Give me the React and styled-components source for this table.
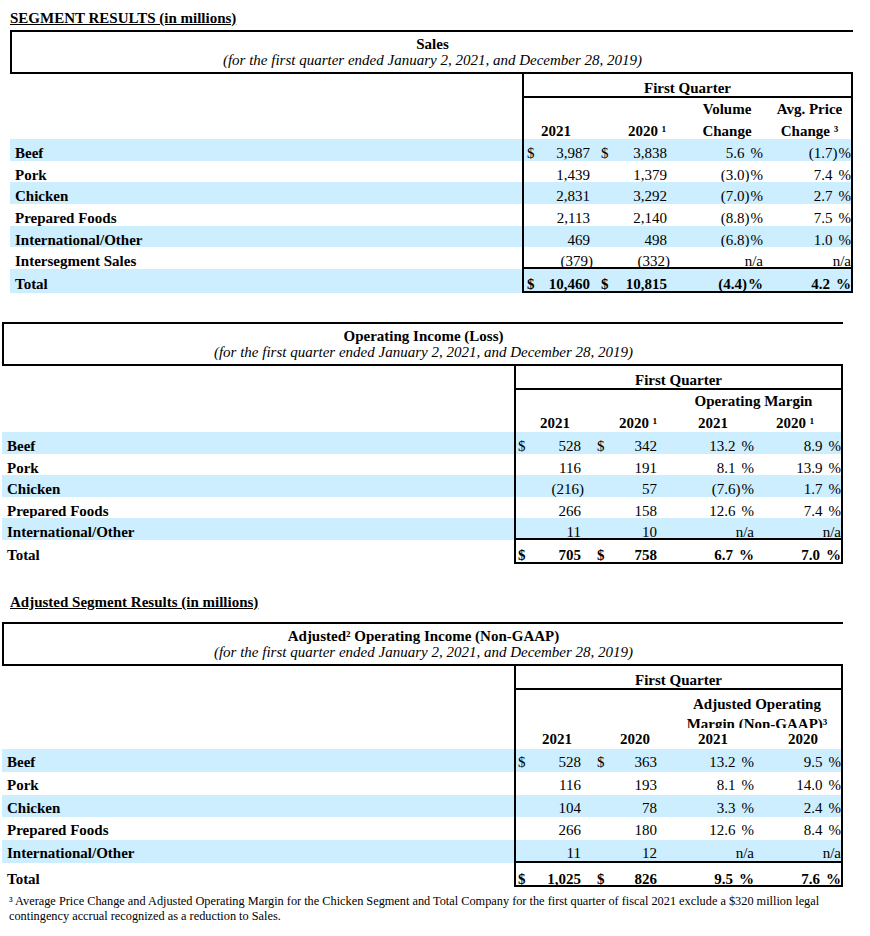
import React from 'react';
import styled, { createGlobalStyle } from 'styled-components';

const BLUE = '#cceeff';
const LINE = '2px solid #000';
const SUBTITLE = '(for the first quarter ended January 2, 2021, and December 28, 2019)';

const SECTIONS = {
  sales: {
    x: 10,
    width: 843,
    title: 'Sales',
    cols: [73, 77, 94, 83],
    pads: [[3, 7], [4, 7], [0, 5], [0, 0]],
    group: { h: 22, pb: 3.5, cells: [null, null, { text: 'Volume', pl: 12 }, { text: 'Avg. Price' }] },
    years: {
      h: 19,
      pb: 0,
      cells: [{ text: '2021', pr: 9 }, { text: '2020 ¹', pl: 23 }, { text: 'Change', pl: 12 }, { text: 'Change ³' }],
    },
    rowH: 21.67,
    rowPt: 6,
    totalPt: 7,
    rows: [
      { label: 'Beef', cur: true, v: ['3,987', '3,838', '5.6', '(1.7)'] },
      { label: 'Pork', v: ['1,439', '1,379', '(3.0)', '7.4'] },
      { label: 'Chicken', v: ['2,831', '3,292', '(7.0)', '2.7'] },
      { label: 'Prepared Foods', v: ['2,113', '2,140', '(8.8)', '7.5'] },
      { label: 'International/Other', v: ['469', '498', '(6.8)', '1.0'] },
      { label: 'Intersegment Sales', v: ['(379)', '(332)', 'n/a', 'n/a'] },
      { label: 'Total', cur: true, total: true, v: ['10,460', '10,815', '(4.4)', '4.2'] },
    ],
  },
  income: {
    x: 2,
    width: 841,
    title: 'Operating Income (Loss)',
    cols: [74, 76, 94, 81],
    pads: [[2, 9], [7, 9], [0, 6], [0, 0]],
    group: { h: 21, pb: 2, cells: [null, null, { text: 'Operating Margin', span: 2 }] },
    years: {
      h: 21,
      pb: 1,
      cells: [{ text: '2021', pl: 4 }, { text: '2020 ¹', pl: 20 }, { text: '2021' }, { text: '2020 ¹', pr: 11 }],
    },
    rowH: 21.6,
    rowPt: 6,
    totalPt: 7,
    rows: [
      { label: 'Beef', cur: true, v: ['528', '342', '13.2', '8.9'] },
      { label: 'Pork', v: ['116', '191', '8.1', '13.9'] },
      { label: 'Chicken', v: ['(216)', '57', '(7.6)', '1.7'] },
      { label: 'Prepared Foods', v: ['266', '158', '12.6', '7.4'] },
      { label: 'International/Other', v: ['11', '10', 'n/a', 'n/a'] },
      { label: 'Total', cur: true, total: true, v: ['705', '758', '6.7', '7.0'] },
    ],
  },
  adjusted: {
    x: 2,
    width: 841,
    title: 'Adjusted² Operating Income (Non-GAAP)',
    cols: [74, 76, 94, 81],
    pads: [[2, 9], [7, 9], [0, 6], [0, 0]],
    group: {
      h: 38,
      cells: [null, null, { text: 'Adjusted Operating Margin (Non-GAAP)³', span: 2, top: true, pt: 4, lh: 20, pl: 7 }],
    },
    years: {
      h: 21,
      pb: 2,
      cells: [{ text: '2021', pl: 8 }, { text: '2020', pl: 14 }, { text: '2021' }, { text: '2020', pl: 5 }],
    },
    rowH: 22.8,
    rowPt: 5,
    totalPt: 8,
    rows: [
      { label: 'Beef', cur: true, v: ['528', '363', '13.2', '9.5'] },
      { label: 'Pork', v: ['116', '193', '8.1', '14.0'] },
      { label: 'Chicken', v: ['104', '78', '3.3', '2.4'] },
      { label: 'Prepared Foods', v: ['266', '180', '12.6', '8.4'] },
      { label: 'International/Other', v: ['11', '12', 'n/a', 'n/a'] },
      { label: 'Total', cur: true, total: true, v: ['1,025', '826', '9.5', '7.6'] },
    ],
  },
};

const isNeg = value => value.startsWith('(');

function Segment({ cfg, mt }) {
  const cols = cfg.cols.map(c => `${c}px`).join(' ');

  const renderHeads = (cells, pb) =>
    cells.map((cell, i) =>
      cell ? (
        <Head
          key={i}
          $span={cell.span}
          $top={cell.top}
          $pt={cell.pt}
          $pb={pb}
          $pl={cell.pl}
          $pr={cell.pr}
          $lh={cell.lh}
        >
          {cell.text}
        </Head>
      ) : (
        <Head key={i} />
      )
    );

  return (
    <Table $x={cfg.x} $w={cfg.width} $mt={mt}>
      <TitleBox>
        <Title>{cfg.title}</Title>
        <Subtitle>{SUBTITLE}</Subtitle>
      </TitleBox>

      <Row $h={24}>
        <Label />
        <Data $cols={cols} $rule>
          <Head $span={4}>First Quarter</Head>
        </Data>
      </Row>
      <Row $h={cfg.group.h}>
        <Label />
        <Data $cols={cols}>{renderHeads(cfg.group.cells, cfg.group.pb)}</Data>
      </Row>
      <Row $h={cfg.years.h}>
        <Label />
        <Data $cols={cols}>{renderHeads(cfg.years.cells, cfg.years.pb)}</Data>
      </Row>

      {cfg.rows.map((row, i) => {
        const next = cfg.rows[i + 1];
        const pt = row.total ? cfg.totalPt : cfg.rowPt;
        return (
          <Row key={row.label} $h={row.total ? 24 : cfg.rowH} $shade={i % 2 === 0} $bold={row.total}>
            <Label $pt={pt}>{row.label}</Label>
            <Data $cols={cols} $pt={pt} $rule={row.total || (next && next.total)}>
              {row.v.slice(0, 2).map((value, c) => (
                <Money key={c} $pl={cfg.pads[c][0]} $pr={cfg.pads[c][1]}>
                  <span>{row.cur ? '$' : ''}</span>
                  <Amount $neg={isNeg(value)}>{value}</Amount>
                </Money>
              ))}
              {row.v.slice(2).map((value, c) => (
                <Pct key={c} $pr={cfg.pads[c + 2][1]}>
                  {value === 'n/a' ? (
                    value
                  ) : (
                    <>
                      <PctNum $neg={isNeg(value)}>{value}</PctNum>
                      <span>%</span>
                    </>
                  )}
                </Pct>
              ))}
            </Data>
          </Row>
        );
      })}
    </Table>
  );
}

export default function App() {
  return (
    <Page>
      <GlobalStyle />
      <Heading $mt={0} $mb={3}>SEGMENT RESULTS (in millions)</Heading>
      <Segment cfg={SECTIONS.sales} />
      <Segment cfg={SECTIONS.income} mt={29} />
      <Heading $mt={29} $mb={11}>Adjusted Segment Results (in millions)</Heading>
      <Segment cfg={SECTIONS.adjusted} />
      <Footnote>
        ³ Average Price Change and Adjusted Operating Margin for the Chicken Segment and Total Company for the
        first quarter of fiscal 2021 exclude a $320 million legal contingency accrual recognized as a reduction to
        Sales.
      </Footnote>
    </Page>
  );
}

const GlobalStyle = createGlobalStyle`
  body {
    margin: 0;
    background: #fff;
    color: #000;
    font-family: 'Liberation Serif', 'Times New Roman', serif;
    font-size: 15px;
  }
`;

const Page = styled.main`
  width: 870px;
  padding-top: 9px;
`;

const Heading = styled.h2`
  margin: ${props => props.$mt}px 0 ${props => props.$mb}px 10px;
  font-size: 15px;
  font-weight: 700;
  line-height: 18px;
  text-decoration: underline;
`;

const Table = styled.section`
  width: ${props => props.$w}px;
  margin-left: ${props => props.$x}px;
  margin-top: ${props => props.$mt || 0}px;
`;

const TitleBox = styled.div`
  border-top: ${LINE};
  border-left: ${LINE};
  border-bottom: ${LINE};
  padding: 4px 0 4px;
  text-align: center;
  line-height: 16px;
`;

const Title = styled.div`
  font-weight: 700;
`;

const Subtitle = styled.div`
  font-style: italic;
`;

const Row = styled.div`
  display: flex;
  height: ${props => props.$h}px;
  overflow: hidden;
  background: ${props => (props.$shade ? BLUE : 'transparent')};
  font-weight: ${props => (props.$bold ? 700 : 400)};
  line-height: 16px;
  white-space: nowrap;
`;

const Label = styled.div`
  flex: none;
  width: 512px;
  box-sizing: border-box;
  padding: ${props => props.$pt || 0}px 0 0 5px;
  font-weight: 700;
`;

const Data = styled.div`
  flex: 1;
  display: grid;
  grid-template-columns: ${props => props.$cols};
  box-sizing: border-box;
  padding-top: ${props => props.$pt || 0}px;
  border-left: ${LINE};
  border-right: ${LINE};
  border-bottom: ${props => (props.$rule ? LINE : 'none')};
`;

const Head = styled.div`
  grid-column: span ${props => props.$span || 1};
  display: flex;
  flex-direction: column;
  justify-content: ${props => (props.$top ? 'flex-start' : 'flex-end')};
  align-items: center;
  padding: ${props => props.$pt || 0}px ${props => props.$pr || 0}px ${props => props.$pb || 0}px
    ${props => props.$pl || 0}px;
  font-weight: 700;
  line-height: ${props => props.$lh || 16}px;
  text-align: center;
  white-space: normal;
`;

const Money = styled.div`
  display: flex;
  justify-content: space-between;
  padding: 0 ${props => props.$pr}px 0 ${props => props.$pl}px;
`;

const Amount = styled.span`
  margin-right: ${props => (props.$neg ? -3 : 0)}px;
`;

const Pct = styled.div`
  display: flex;
  justify-content: flex-end;
  gap: 1px;
  padding-right: ${props => props.$pr}px;
`;

const PctNum = styled.span`
  padding-right: ${props => (props.$neg ? 0 : 5)}px;
`;

const Footnote = styled.p`
  max-width: 835px;
  margin: 7px 0 0 9px;
  font-size: 12.3px;
  line-height: 15px;
`;
